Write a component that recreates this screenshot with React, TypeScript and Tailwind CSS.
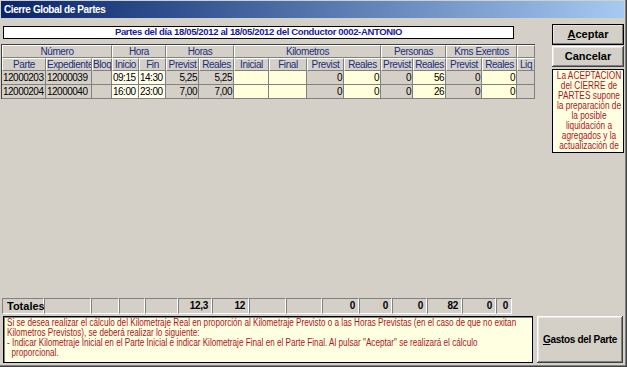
import React from 'react';

const raised =
  'shadow-[inset_-1px_-1px_#404040,inset_1px_1px_#ffffff,inset_-2px_-2px_#808080,inset_2px_2px_#e8e6e0]';

const G = 'bg-[#d4d0c8]';
const Y = 'bg-[#ffffdc]';
const C = 'bg-[#ffffec]';

const colBg = [G, G, G, C, C, G, G, Y, Y, G, Y, G, Y, G, Y, G];
const colAlign = ['text-left', 'text-left', 'text-left', 'text-left', 'text-left', 'text-right', 'text-right', 'text-right', 'text-right', 'text-right', 'text-right', 'text-right', 'text-right', 'text-right', 'text-right', 'text-left'];

const rows: string[][] = [
  ['12000203', '12000039', '', '09:15', '14:30', '5,25', '5,25', '', '', '0', '0', '0', '56', '0', '0', ''],
  ['12000204', '12000040', '', '16:00', '23:00', '7,00', '7,00', '', '', '0', '0', '0', '26', '0', '0', ''],
];

const groups = [
  { label: 'Número', span: 'col-span-3' },
  { label: 'Hora', span: 'col-span-2' },
  { label: 'Horas', span: 'col-span-2' },
  { label: 'Kilometros', span: 'col-span-4' },
  { label: 'Personas', span: 'col-span-2' },
  { label: 'Kms Exentos', span: 'col-span-2' },
  { label: '', span: 'col-span-1' },
];

const subs = ['Parte', 'Expediente', 'Bloq', 'Inicio', 'Fin', 'Previst', 'Reales', 'Inicial', 'Final', 'Previst', 'Reales', 'Previst', 'Reales', 'Previst', 'Reales', 'Liq'];

const totals = ['Totales', '', '', '', '', '12,3', '12', '', '', '0', '0', '0', '82', '0', '0'];

const infoLines = [
  'La ACEPTACION',
  'del CIERRE de',
  'PARTES supone',
  'la preparación de',
  'la posible',
  'liquidación a',
  'agregados y la',
  'actualización de',
];

const noteLines = [
  'Si se desea realizar el cálculo del Kilometraje Real en proporción al Kilometraje Previsto o a las Horas Previstas (en el caso de que no exitan',
  'Kilometros Previstos), se deberá realizar lo siguiente:',
  '- Indicar Kilometraje Inicial en el Parte Inicial e indicar Kilometraje Final en el Parte Final. Al pulsar "Aceptar" se realizará el cálculo',
  '\u00a0\u00a0proporcional.',
];

const headCell =
  'bg-[#d4d0c8] border-t border-l border-t-white border-l-white border-r border-b border-r-[#808080] border-b-[#808080] text-[#1c2f7c] text-center leading-[12px] overflow-hidden whitespace-nowrap tracking-[-0.4px]';

function Grid() {
  const cols =
    'grid grid-cols-[44px_46px_20px_27px_27px_33px_35px_35px_38px_37px_37px_32px_33px_36px_35px_18px]';
  return (
    <div className="w-[535px] h-[251px] mt-[5px]">
      <div className={`${cols} border-t border-l border-[#404040] w-[534px]`}>
        {groups.map((g, i) => (
          <div key={i} className={`${g.span} ${headCell} h-[13px]`}>
            {g.label}
          </div>
        ))}
        {subs.map((s, i) => (
          <div key={i} className={`${headCell} h-[13px]`}>
            {s}
          </div>
        ))}
        {rows.map((r, ri) =>
          r.map((v, ci) => (
            <div
              key={`${ri}-${ci}`}
              className={`${colBg[ci]} ${colAlign[ci]} h-[14px] px-[1px] leading-[13px] tracking-[-0.5px] border-r border-b border-[#808080] overflow-hidden whitespace-nowrap text-black`}
            >
              {v}
            </div>
          ))
        )}
      </div>
    </div>
  );
}

function Totals() {
  return (
    <div className="ml-[1px] mt-[3px] grid grid-cols-[42px_47px_28px_26px_33px_34px_37px_37px_36px_37px_33px_35px_35px_34px_16px] w-[510px]">
      {totals.map((t, i) => (
        <div
          key={i}
          className={`h-[16px] bg-[#d4d0c8] border-t border-l border-t-[#808080] border-l-[#808080] border-b border-r border-b-white border-r-white leading-[14px] px-[3px] font-bold text-black whitespace-nowrap ${i === 0 ? 'text-left text-[11px] pl-[4px]' : 'text-right tracking-[-0.3px]'}`}
        >
          {t}
        </div>
      ))}
    </div>
  );
}

function Button({ children, className }: { children: React.ReactNode; className: string }) {
  return (
    <div
      className={`${raised} bg-[#d4d0c8] flex items-center justify-center font-bold text-black whitespace-nowrap ${className}`}
    >
      {children}
    </div>
  );
}

export default function App() {
  return (
    <div
      className="w-[627px] h-[367px] bg-[#d4d0c8] flex flex-col pl-[1px] pt-[1px] pr-[3px] pb-[3px] shadow-[inset_-1px_-1px_#404040,inset_-2px_-2px_#808080] text-[10px] overflow-hidden"
      style={{ fontFamily: '"Liberation Sans", Arial, sans-serif' }}
    >
      <div className="h-[17px] shrink-0 bg-gradient-to-r from-[#0a246a] to-[#a6caf0] flex items-center pl-[3px]">
        <span className="text-white font-bold text-[10px] tracking-[-0.4px]">Cierre Global de Partes</span>
      </div>

      <div className="flex flex-1">
        <div className="w-[536px] flex flex-col">
          <div className="ml-[2px] mt-[8px] w-[511px] h-[13px] bg-white border border-black flex items-center justify-center font-bold text-[#1a1aa0] text-[9.5px] tracking-[-0.35px]">
            Partes del día 18/05/2012 al 18/05/2012 del Conductor 0002-ANTONIO
          </div>
          <Grid />
          <Totals />
        </div>
        <div className="flex-1 flex flex-col items-end pt-[6px]">
          <Button className="w-[72px] h-[21px] text-[11px] outline outline-1 outline-black -outline-offset-1">
            <span>
              <span className="underline">A</span>ceptar
            </span>
          </Button>
          <Button className="w-[72px] h-[21px] mt-[1px] text-[11px]">Cancelar</Button>
          <div className="mt-[2px] w-[72px] h-[84px] bg-[#ffffe1] border border-black overflow-hidden text-[#b0141e] leading-[10px] pt-[1px]">
            <div className="w-[84px] -ml-[6px] scale-x-[0.83] origin-top text-center">
              {infoLines.map((l, i) => (
                <div key={i} className="whitespace-nowrap">
                  {l}
                </div>
              ))}
            </div>
          </div>
        </div>
      </div>

      <div className="flex items-stretch h-[48px] mt-[2px] mb-[1px]">
        <div className="ml-[2px] w-[530px] bg-[#ffffe1] border border-black shadow-[inset_1px_1px_#808080] pl-[3px] pt-[1px] text-[#b0141e] leading-[10px] overflow-hidden">
          <div className="scale-x-[0.815] origin-top-left">
            {noteLines.map((l, i) => (
              <div key={i} className="whitespace-nowrap">
                {l}
              </div>
            ))}
          </div>
        </div>
        <Button className="ml-[4px] w-[86px] text-[10px] tracking-[-0.3px]">
          <span>
            <span className="underline">G</span>astos del Parte
          </span>
        </Button>
      </div>
    </div>
  );
}
